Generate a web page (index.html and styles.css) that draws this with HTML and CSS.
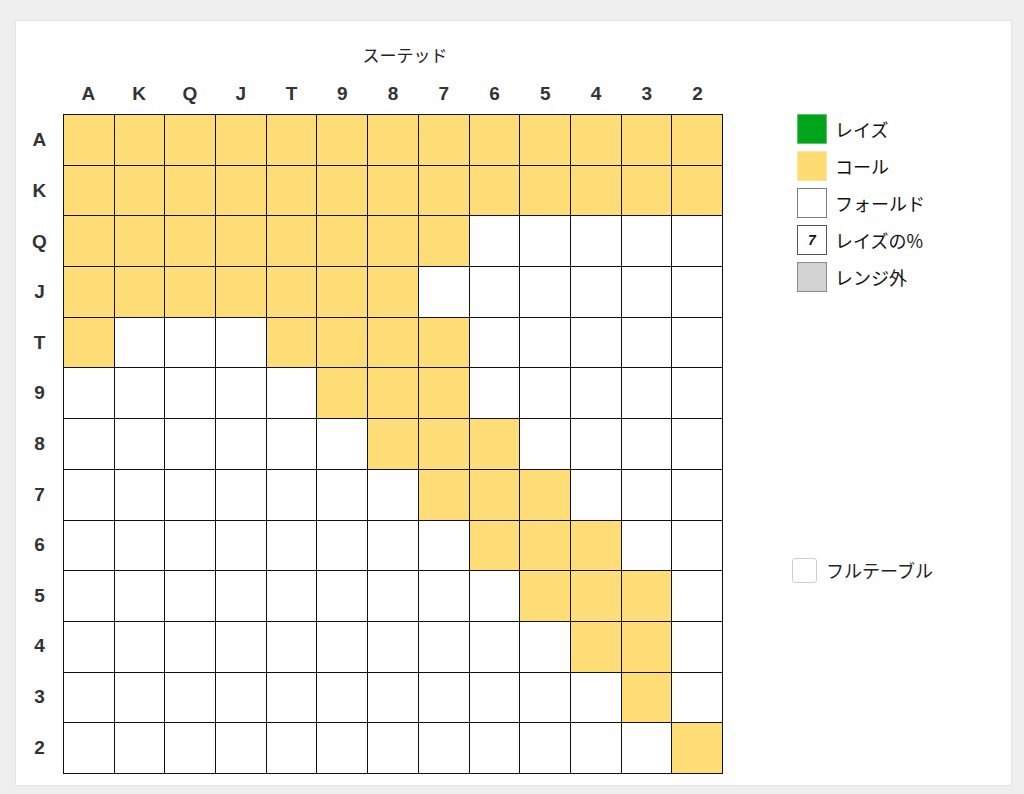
FILE: index.html
```html
<html><head>
<meta charset="UTF-8">
<link rel="stylesheet" href="styles.css">
</head>
<body>
<div class="panel">
  <div class="chart">
    <div class="title">スーテッド</div>
    <div class="cols">
      <span>A</span><span>K</span><span>Q</span><span>J</span><span>T</span><span>9</span><span>8</span>
      <span>7</span><span>6</span><span>5</span><span>4</span><span>3</span><span>2</span>
    </div>
    <div class="area">
      <div class="rows">
        <span>A</span><span>K</span><span>Q</span><span>J</span><span>T</span><span>9</span><span>8</span>
        <span>7</span><span>6</span><span>5</span><span>4</span><span>3</span><span>2</span>
      </div>
      <div class="board">
        <!-- A -->
        <div class="y"></div><div class="y"></div><div class="y"></div><div class="y"></div><div class="y"></div><div class="y"></div><div class="y"></div><div class="y"></div><div class="y"></div><div class="y"></div><div class="y"></div><div class="y"></div><div class="y"></div>
        <!-- K -->
        <div class="y"></div><div class="y"></div><div class="y"></div><div class="y"></div><div class="y"></div><div class="y"></div><div class="y"></div><div class="y"></div><div class="y"></div><div class="y"></div><div class="y"></div><div class="y"></div><div class="y"></div>
        <!-- Q -->
        <div class="y"></div><div class="y"></div><div class="y"></div><div class="y"></div><div class="y"></div><div class="y"></div><div class="y"></div><div class="y"></div><div></div><div></div><div></div><div></div><div></div>
        <!-- J -->
        <div class="y"></div><div class="y"></div><div class="y"></div><div class="y"></div><div class="y"></div><div class="y"></div><div class="y"></div><div></div><div></div><div></div><div></div><div></div><div></div>
        <!-- T -->
        <div class="y"></div><div></div><div></div><div></div><div class="y"></div><div class="y"></div><div class="y"></div><div class="y"></div><div></div><div></div><div></div><div></div><div></div>
        <!-- 9 -->
        <div></div><div></div><div></div><div></div><div></div><div class="y"></div><div class="y"></div><div class="y"></div><div></div><div></div><div></div><div></div><div></div>
        <!-- 8 -->
        <div></div><div></div><div></div><div></div><div></div><div></div><div class="y"></div><div class="y"></div><div class="y"></div><div></div><div></div><div></div><div></div>
        <!-- 7 -->
        <div></div><div></div><div></div><div></div><div></div><div></div><div></div><div class="y"></div><div class="y"></div><div class="y"></div><div></div><div></div><div></div>
        <!-- 6 -->
        <div></div><div></div><div></div><div></div><div></div><div></div><div></div><div></div><div class="y"></div><div class="y"></div><div class="y"></div><div></div><div></div>
        <!-- 5 -->
        <div></div><div></div><div></div><div></div><div></div><div></div><div></div><div></div><div></div><div class="y"></div><div class="y"></div><div class="y"></div><div></div>
        <!-- 4 -->
        <div></div><div></div><div></div><div></div><div></div><div></div><div></div><div></div><div></div><div></div><div class="y"></div><div class="y"></div><div></div>
        <!-- 3 -->
        <div></div><div></div><div></div><div></div><div></div><div></div><div></div><div></div><div></div><div></div><div></div><div class="y"></div><div></div>
        <!-- 2 -->
        <div></div><div></div><div></div><div></div><div></div><div></div><div></div><div></div><div></div><div></div><div></div><div></div><div class="y"></div>
      </div>
    </div>
  </div>

  <div class="legend">
    <div class="item"><span class="sw raise"></span>レイズ</div>
    <div class="item"><span class="sw call"></span>コール</div>
    <div class="item"><span class="sw fold"></span>フォールド</div>
    <div class="item"><span class="sw pct">7</span>レイズの%</div>
    <div class="item"><span class="sw out"></span>レンジ外</div>
    <label class="full"><span class="check"></span>フルテーブル</label>
  </div>
</div>
</body></html>
```

FILE: styles.css
```css
body {
  margin: 0;
  background: #efefef;
  font-family: "Liberation Sans", Arial, "Noto Sans CJK JP", sans-serif;
}

* {
  box-sizing: border-box;
}

.panel {
  display: flex;
  margin: 20px 0 0 15px;
  width: 997px;
  height: 766px;
  background: #fff;
  border: 1px solid #e3e3e3;
}

.chart {
  width: 707px;
}

.title {
  margin: 24px 0 0 47px;
  padding-left: 24px;
  width: 660px;
  height: 20px;
  line-height: 20px;
  text-align: center;
  font-family: "Noto Sans CJK JP", sans-serif;
  font-size: 17px;
  color: #222;
}

.cols {
  display: grid;
  grid-template-columns: repeat(13, 1fr);
  margin: 9px 0 0 47px;
  width: 660px;
  height: 40px;
  line-height: 40px;
  text-align: center;
}

.cols span, .rows span {
  font-weight: bold;
  font-size: 19px;
  color: #333;
}

.area {
  display: flex;
}

.rows {
  display: grid;
  grid-template-rows: repeat(13, 1fr);
  width: 47px;
  height: 660px;
  padding: 1px 0;
}

.rows span {
  display: flex;
  align-items: center;
  justify-content: center;
}

.board {
  display: grid;
  grid-template-columns: repeat(13, 1fr);
  grid-template-rows: repeat(13, 1fr);
  gap: 1px;
  padding: 1px;
  width: 661px;
  height: 660px;
  background: #111;
}

.board div {
  background: #fff;
}

.board .y {
  background: #ffdd76;
}

.legend {
  display: flex;
  flex-direction: column;
  gap: 7px;
  margin: 93px 0 0 74px;
}

.item {
  display: flex;
  align-items: center;
  gap: 8px;
  height: 30px;
  font-family: "Noto Sans CJK JP", sans-serif;
  font-size: 18px;
  color: #111;
}

.sw {
  width: 30px;
  height: 30px;
  border: 1px solid #777;
  background: #fff;
}

.raise {
  background: #00a51b;
  border-color: #5fc46d;
}

.call {
  background: #ffdc73;
  border-color: #ffe49a;
}

.fold {
  border-color: #7a7a7a;
}

.pct {
  display: flex;
  align-items: center;
  justify-content: center;
  border-color: #555;
  font-family: "Liberation Sans", Arial, sans-serif;
  font-weight: bold;
  font-style: italic;
  font-size: 14px;
}

.out {
  background: #d2d2d2;
  border-color: #8a8a8a;
}

.full {
  display: flex;
  align-items: center;
  gap: 9px;
  margin: 258px 0 0 -5px;
  font-family: "Noto Sans CJK JP", sans-serif;
  font-size: 18px;
  color: #222;
}

.check {
  width: 25px;
  height: 25px;
  border: 1px solid #cfcfcf;
  border-radius: 3px;
  background: #fff;
}
```
